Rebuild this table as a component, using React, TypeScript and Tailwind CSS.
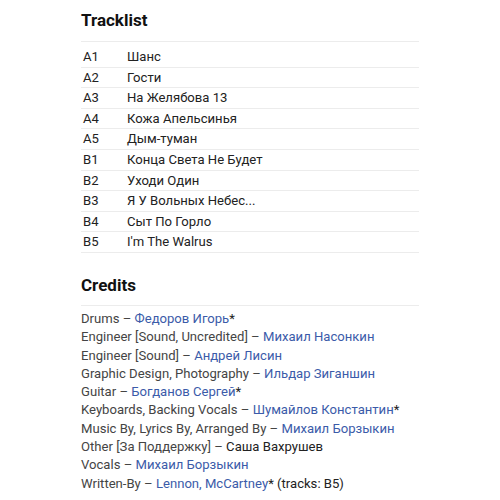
const tracks: [string, string][] = [
  ['A1', 'Шанс'],
  ['A2', 'Гости'],
  ['A3', 'На Желябова 13'],
  ['A4', 'Кожа Апельсинья'],
  ['A5', 'Дым-туман'],
  ['B1', 'Конца Света Не Будет'],
  ['B2', 'Уходи Один'],
  ['B3', 'Я У Вольных Небес...'],
  ['B4', 'Сыт По Горло'],
  ['B5', "I'm The Walrus"],
]

type Credit = { role: string; name: string; link?: boolean; star?: boolean; extra?: string }

const credits: Credit[] = [
  { role: 'Drums', name: 'Федоров Игорь', link: true, star: true },
  { role: 'Engineer [Sound, Uncredited]', name: 'Михаил Насонкин', link: true },
  { role: 'Engineer [Sound]', name: 'Андрей Лисин', link: true },
  { role: 'Graphic Design, Photography', name: 'Ильдар Зиганшин', link: true },
  { role: 'Guitar', name: 'Богданов Сергей', link: true, star: true },
  { role: 'Keyboards, Backing Vocals', name: 'Шумайлов Константин', link: true, star: true },
  { role: 'Music By, Lyrics By, Arranged By', name: 'Михаил Борзыкин', link: true },
  { role: 'Other [За Поддержку]', name: 'Саша Вахрушев' },
  { role: 'Vocals', name: 'Михаил Борзыкин', link: true },
  { role: 'Written-By', name: 'Lennon, McCartney', link: true, star: true, extra: ' (tracks: B5)' },
]

export default function App() {
  return (
    <div className="w-[500px] h-[500px] bg-white overflow-hidden font-['Roboto',sans-serif] text-[#222]">
      <div className="ml-[81px] w-[338px] pt-[9px]">
        <h2 className="text-[17px] font-bold leading-[22px] text-[#111]">Tracklist</h2>
        <div className="mt-[10px] border-t border-[#ececec] pt-[5px]">
          {tracks.map(([pos, title]) => (
            <div key={pos} className="flex h-[20.6px] items-center border-b border-[#ececec] text-[13.1px]">
              <span className="w-[46px] pl-[2px]">{pos}</span>
              <span>{title}</span>
            </div>
          ))}
        </div>

        <h2 className="mt-[21px] text-[17px] font-bold leading-[22px] text-[#111]">Credits</h2>
        <div className="mt-[9px] border-t border-[#ececec] pt-[4px] text-[13.1px] leading-[18.3px]">
          {credits.map((c, i) => (
            <div key={i} className="whitespace-nowrap">
              <span className="text-[#444]">{c.role} – </span>
              <span className={c.link ? 'text-[#3b5ba9]' : 'text-[#222]'}>{c.name}</span>
              {c.star && <span>*</span>}
              {c.extra && <span>{c.extra}</span>}
            </div>
          ))}
        </div>
      </div>
    </div>
  )
}
